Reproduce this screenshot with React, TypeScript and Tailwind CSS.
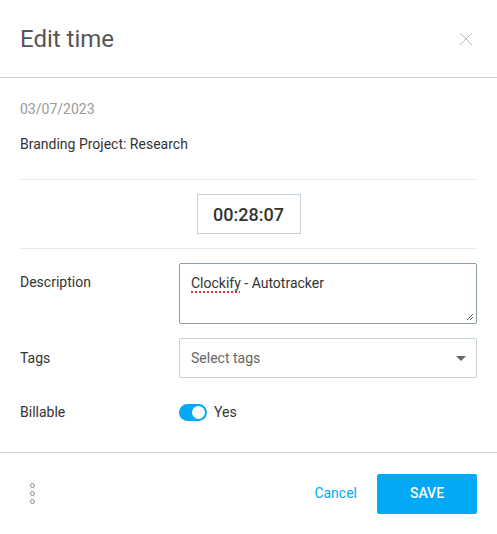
import { useState } from 'react'

function ResizeGrip() {
  return (
    <svg className="absolute bottom-[2px] right-[2px]" width="8" height="8" viewBox="0 0 8 8" aria-hidden>
      <path d="M7 1L1 7M7 4L4 7" stroke="#666" strokeWidth="1" />
    </svg>
  )
}

export default function App() {
  const [billable, setBillable] = useState(true)

  return (
    <div className="h-[534px] w-[497px] bg-white font-['Roboto',sans-serif] text-[14px] text-[#333]">
      <header className="flex h-[78px] items-center justify-between border-b border-[#c6d2d9] pl-5 pr-6">
        <h1 className="text-[24px] font-normal text-[#555]">Edit time</h1>
        <button className="text-[#bbb]" aria-label="Close">
          <svg width="14" height="14" viewBox="0 0 14 14">
            <path d="M1 1L13 13M13 1L1 13" stroke="currentColor" strokeWidth="1" />
          </svg>
        </button>
      </header>

      <div className="px-5">
        <p className="pt-[21px] text-[#999]">03/07/2023</p>
        <p className="pt-[14px]">Branding Project: Research</p>

        <div className="mt-[24px] border-t border-[#e4eaee]" />
        <div className="flex justify-center py-[14px]">
          <div className="flex h-[40px] w-[104px] items-center justify-center border border-[#c6d2d9] text-[18px] font-medium text-[#333]">
            00:28:07
          </div>
        </div>
        <div className="border-t border-[#e4eaee]" />

        <div className="grid grid-cols-[159px_1fr] items-center gap-y-[14px] pt-[14px]">
          <span className="self-start pt-[9px]">Description</span>
          <div className="relative h-[61px] rounded-[2px] border border-[#8f9ea6] px-[11px] pt-[9px]">
            <span className="underline decoration-[#e53935] decoration-dotted decoration-2 underline-offset-[3px]">Clockify</span>
            <span> - Autotracker</span>
            <ResizeGrip />
          </div>

          <span>Tags</span>
          <div className="flex h-[40px] items-center justify-between rounded-[2px] border border-[#c6d2d9] pl-[11px] pr-[10px] text-[#666]">
            <span>Select tags</span>
            <svg width="10" height="5" viewBox="0 0 10 5">
              <path d="M0 0H10L5 5Z" fill="#666" />
            </svg>
          </div>

          <span className="pt-[10px]">Billable</span>
          <div className="flex items-center gap-[7px] pt-[10px]">
            <button
              onClick={() => setBillable(!billable)}
              className={`relative h-[17px] w-[28px] rounded-full ${billable ? 'bg-[#03a9f4]' : 'bg-[#c6d2d9]'}`}
              aria-label="Billable"
            >
              <span
                className={`absolute top-[2px] h-[13px] w-[13px] rounded-full bg-white ${billable ? 'left-[13px]' : 'left-[2px]'}`}
              />
            </button>
            <span>Yes</span>
          </div>
        </div>
      </div>

      <footer className="mt-[29px] flex h-[82px] items-center justify-between border-t border-[#c6d2d9] pl-[30px] pr-5">
        <div className="flex flex-col gap-[3px]">
          {[0, 1, 2].map((i) => (
            <span key={i} className="h-[5px] w-[5px] rounded-full border border-[#888]" />
          ))}
        </div>
        <div className="flex items-center gap-5">
          <button className="text-[#03a9f4]">Cancel</button>
          <button className="h-[40px] w-[100px] rounded-[2px] bg-[#03a9f4] font-medium text-white">SAVE</button>
        </div>
      </footer>
    </div>
  )
}
